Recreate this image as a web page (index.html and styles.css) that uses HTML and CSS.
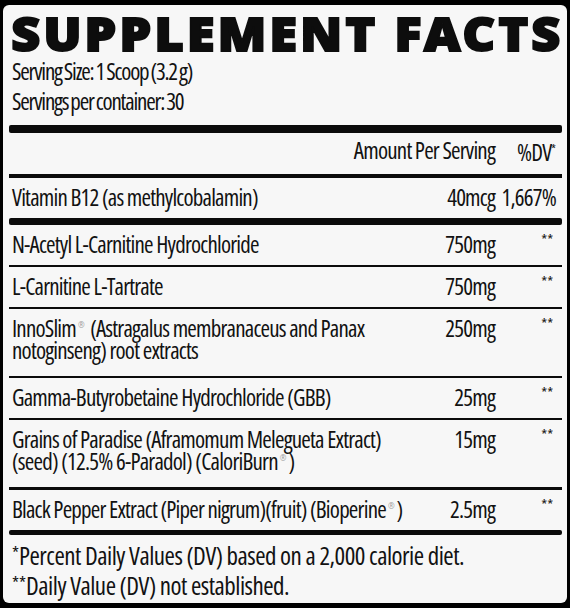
FILE: index.html
```html
<!DOCTYPE html>
<html lang="en">
<head>
<meta charset="utf-8">
<title>Supplement Facts</title>
<link rel="stylesheet" href="styles.css">
</head>
<body>
<main class="label">
  <h1 class="title">SUPPLEMENT FACTS</h1>
  <div class="serving">
    <div>Serving Size: 1 Scoop (3.2 g)</div>
    <div>Servings per container: 30</div>
  </div>
  <div class="bar bar-thick"></div>
  <div class="row row-head">
    <div class="amt">Amount Per Serving</div>
    <div class="dv">%DV<span class="ast">*</span></div>
  </div>
  <div class="bar bar-mid"></div>
  <div class="row">
    <div class="name">Vitamin B12 (as methylcobalamin)</div>
    <div class="amt">40mcg</div>
    <div class="dv">1,667%</div>
  </div>
  <div class="bar bar-heavy"></div>
  <div class="row">
    <div class="name">N-Acetyl L-Carnitine Hydrochloride</div>
    <div class="amt">750mg</div>
    <div class="dv"><span class="stars">**</span></div>
  </div>
  <div class="bar bar-thin"></div>
  <div class="row">
    <div class="name">L-Carnitine L-Tartrate</div>
    <div class="amt">750mg</div>
    <div class="dv"><span class="stars">**</span></div>
  </div>
  <div class="bar bar-thin"></div>
  <div class="row row-two">
    <div class="name">InnoSlim<sup class="reg">®</sup> (Astragalus membranaceus and Panax<br>notoginseng) root extracts</div>
    <div class="amt">250mg</div>
    <div class="dv"><span class="stars">**</span></div>
  </div>
  <div class="bar bar-thin"></div>
  <div class="row">
    <div class="name">Gamma-Butyrobetaine Hydrochloride (GBB)</div>
    <div class="amt">25mg</div>
    <div class="dv"><span class="stars">**</span></div>
  </div>
  <div class="bar bar-thin"></div>
  <div class="row row-two">
    <div class="name">Grains of Paradise (Aframomum Melegueta Extract)<br>(seed) (12.5% 6-Paradol) (CaloriBurn<sup class="reg">®</sup>)</div>
    <div class="amt">15mg</div>
    <div class="dv"><span class="stars">**</span></div>
  </div>
  <div class="bar bar-med"></div>
  <div class="row">
    <div class="name">Black Pepper Extract (Piper nigrum)(fruit) (Bioperine<sup class="reg">®</sup>)</div>
    <div class="amt">2.5mg</div>
    <div class="dv"><span class="stars">**</span></div>
  </div>
  <div class="bar bar-foot"></div>
  <div class="notes">
    <p><span class="note-mark">*</span>Percent Daily Values (DV) based on a 2,000 calorie diet.</p>
    <p><span class="note-mark">**</span>Daily Value (DV) not established.</p>
  </div>
</main>
</body>
</html>
```
FILE: styles.css
```css
html {
  background: #000;
  overflow: hidden;
}

body {
  margin: 0;
  background: #000;
  font-family: "Open Sans", "Roboto", sans-serif;
  font-stretch: 75%;
  color: #121212;
}

.label {
  margin: 5px 3px 0 3px;
  height: 598px;
  box-sizing: border-box;
  padding: 0 5px 0 6px;
  background: #f7f7f7;
  border-radius: 6px;
}

.title {
  width: max-content;
  margin: 0;
  padding: 2px 0 0 2px;
  font-family: "Noto Sans", "Open Sans", sans-serif;
  font-stretch: 100%;
  font-weight: 900;
  font-size: 46px;
  line-height: 52px;
  height: 49px;
  letter-spacing: 3px;
  -webkit-text-stroke: 2px #0d0d0d;
  color: #0d0d0d;
  white-space: nowrap;
  transform: scaleX(1.09);
  transform-origin: left top;
}

.serving {
  padding-left: 3px;
  font-size: 23px;
  line-height: 30px;
  letter-spacing: -1.2px;
  word-spacing: -1px;
}

.bar {
  background: #0b0b0b;
}
.bar-thick { height: 8px; margin-top: 9px; border-radius: 2px; }
.bar-mid { height: 4px; }
.bar-heavy { height: 7px; border-radius: 2px; }
.bar-thin { height: 2px; }
.bar-med { height: 3px; }
.bar-foot { height: 5px; border-radius: 2px; }

.row {
  display: grid;
  grid-template-columns: minmax(0, 1fr) 90px 61px;
  padding: 8px 6px 10px 3px;
  font-size: 23px;
  line-height: 22px;
  letter-spacing: -0.8px;
}

.row-head {
  padding-top: 6px;
  padding-bottom: 11px;
}

.row-head .amt {
  grid-column: 1 / 3;
}

.row-two {
  padding-bottom: 15px;
}

.name {
  white-space: nowrap;
}

.amt {
  text-align: right;
  white-space: nowrap;
}

.dv {
  text-align: right;
  white-space: nowrap;
}

.ast {
  font-size: 12px;
  vertical-align: 7px;
  letter-spacing: 0;
}

.stars {
  display: inline-block;
  padding-right: 3px;
  font-size: 15px;
  line-height: 14px;
  letter-spacing: 0;
  vertical-align: top;
  margin-top: -1px;
}

.reg {
  font-size: 8px;
  line-height: 0;
  color: #9a9a9a;
  vertical-align: 9px;
  margin: 0 2px;
  letter-spacing: 0;
}

.notes {
  padding: 4px 0 0 3px;
  font-size: 25px;
  line-height: 28px;
  letter-spacing: -0.5px;
}

.notes p {
  margin: 0;
}

.note-mark {
  font-size: 18px;
  vertical-align: 5px;
  letter-spacing: 0;
}
```
